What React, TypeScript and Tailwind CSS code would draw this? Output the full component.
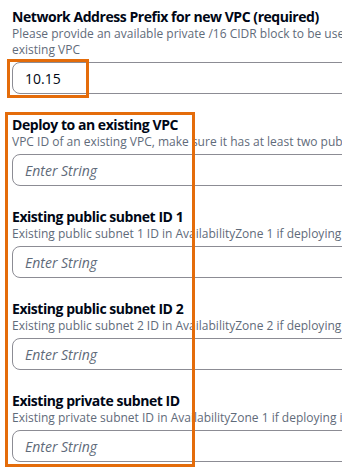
import React from 'react'

const fields = [
    { label: 'Deploy to an existing VPC', desc: 'VPC ID of an existing VPC, make sure it has at least two public subnets and one private subnet' },
    { label: 'Existing public subnet ID 1', desc: 'Existing public subnet 1 ID in AvailabilityZone 1 if deploying to an existing VPC' },
    { label: 'Existing public subnet ID 2', desc: 'Existing public subnet 2 ID in AvailabilityZone 2 if deploying to an existing VPC' },
    { label: 'Existing private subnet ID', desc: 'Existing private subnet ID in AvailabilityZone 1 if deploying into an existing VPC' },
]

const App = () => {
    return (
        <div className="relative h-[473px] w-full overflow-hidden bg-white font-['Open_Sans',sans-serif] text-[#000716]">
            <div className="flex w-[380px] flex-col gap-[22px] pl-3 pt-2">
                {/* CIDR field */}
                <div className="flex flex-col">
                    <div className="whitespace-nowrap text-[14px] font-bold leading-[18px] tracking-[-0.45px]">Network Address Prefix for new VPC (required)</div>
                    <div className="text-[12px] leading-[16px] text-[#5f6b7a]">
                        <div className="whitespace-nowrap">Please provide an available private /16 CIDR block to be used for the new VPC</div>
                        <div>existing VPC</div>
                    </div>
                    <div className="mt-1 flex h-8 items-center rounded-lg border border-[#8c8c94] px-3 text-[14px]">10.15</div>
                </div>

                {fields.map((f) => (
                    <div key={f.label} className="flex flex-col">
                        <div className="whitespace-nowrap text-[14px] font-bold leading-[18px] tracking-[-0.45px]">{f.label}</div>
                        <div className="whitespace-nowrap text-[12px] leading-[16px] text-[#5f6b7a]">{f.desc}</div>
                        <div className="mt-1 flex h-8 items-center rounded-lg border border-[#8c8c94] px-3 text-[14px] italic text-[#5f6b7a]">Enter String</div>
                    </div>
                ))}
            </div>

            {/* highlight boxes */}
            <div className="absolute left-[7px] top-[59px] h-[39px] w-[82px] border-[3px] border-[#e46c0a]" />
            <div className="absolute left-[5px] top-[112px] h-[355px] w-[190px] border-[3px] border-[#e46c0a]" />
        </div>
    )
}

export default App
